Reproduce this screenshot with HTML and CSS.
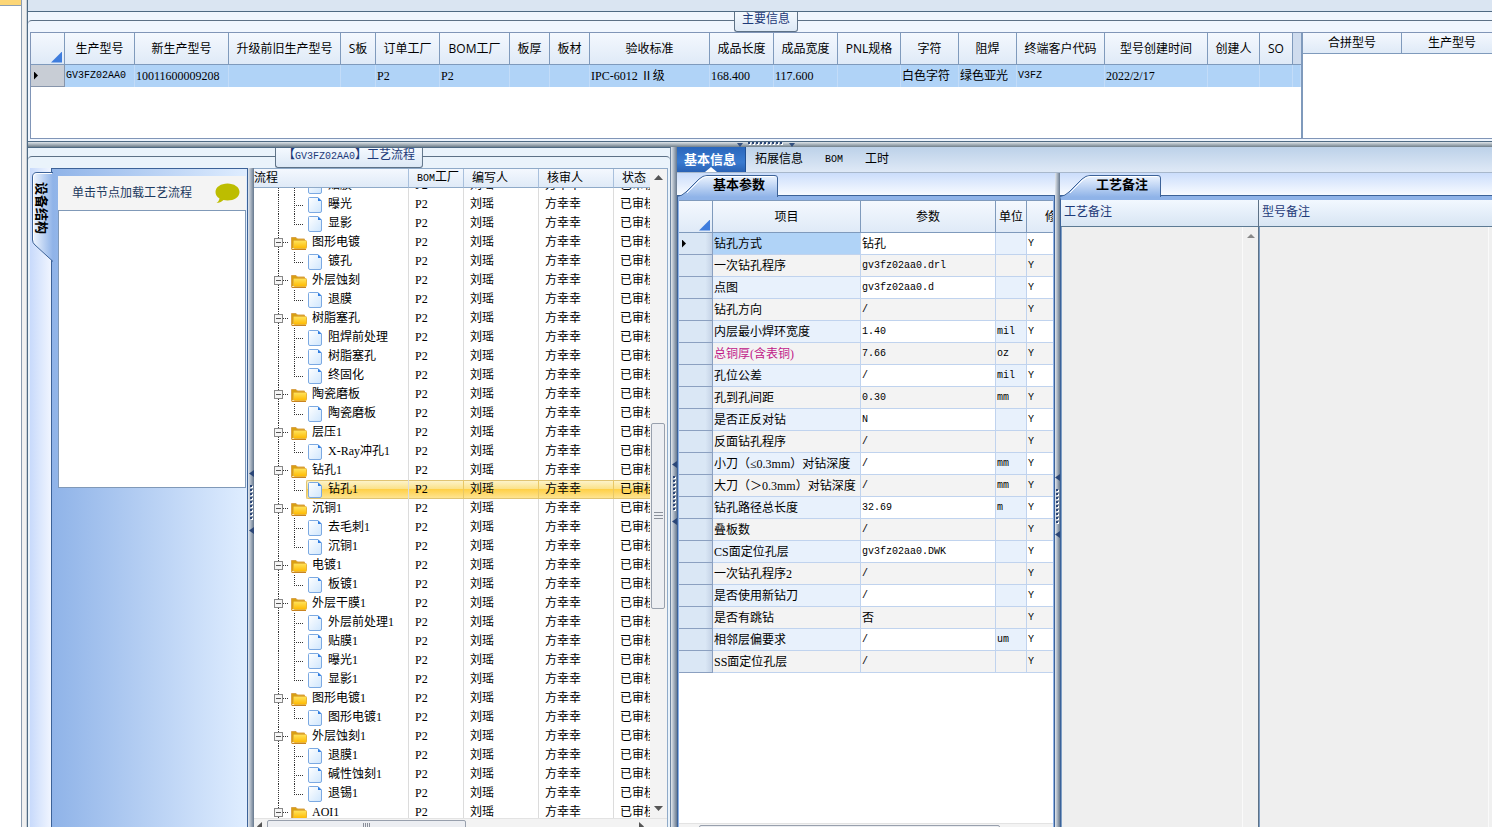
FILE: index.html
```html
<!DOCTYPE html>
<html lang="zh-CN">

<head>
  <meta charset="UTF-8">
  <title>工艺流程</title>
  <link rel="stylesheet" href="styles.css">
</head>

<body>
  <!-- 公用图标 -->
  <svg class="defs" width="0" height="0">
    <defs>
      <linearGradient id="gFolder" x1="0" y1="0" x2="0" y2="1">
        <stop offset="0" stop-color="#ffe45c" />
        <stop offset="1" stop-color="#ffb900" />
      </linearGradient>
      <linearGradient id="gFile" x1="0" y1="0" x2="1" y2="1">
        <stop offset="0" stop-color="#ffffff" />
        <stop offset="1" stop-color="#cfe6fd" />
      </linearGradient>
      <linearGradient id="gTab" x1="0" y1="0" x2="0" y2="1">
        <stop offset="0" stop-color="#eef5ff" />
        <stop offset="1" stop-color="#8fb3e8" />
      </linearGradient>
      <linearGradient id="gSide" x1="0" y1="0" x2="1" y2="0">
        <stop offset="0" stop-color="#f2f7ff" />
        <stop offset="1" stop-color="#8fb3e8" />
      </linearGradient>
      <symbol id="folder" viewBox="0 0 16 14">
        <path d="M0.5 13V1.5H5L6.5 3H13.5V5" fill="#d9a012" stroke="#d9a24a" />
        <path d="M0.5 13.5V2" stroke="#d9a24a" />
        <rect x="2.5" y="4.5" width="13" height="8" rx="1" fill="url(#gFolder)" stroke="#e8b53a" />
        <path d="M1 13.5H15" stroke="#c98420" />
      </symbol>
      <symbol id="file" viewBox="0 0 14 16">
        <path d="M1.5 0.5H10L13.5 4V14Q13.5 15.5 12 15.5H2Q0.5 15.5 0.5 14V1.5Q0.5 0.5 1.5 0.5Z" fill="url(#gFile)" stroke="#7ba9e2" />
        <path d="M10 0.5L13.5 4H10Z" fill="#2f7de0" />
      </symbol>
    </defs>
  </svg>

  <div class="app">
    <div class="dock">
      <div class="dock-item"></div>
    </div>
    <div class="edge"></div>

    <div class="main">
      <div class="topbar"></div>

      <!-- 主要信息 -->
      <section class="group info">
        <h2 class="caption">主要信息</h2>
        <div class="frame">
          <div class="info-grids">
            <div class="grid-left">
              <table class="grid" id="infoTable">
                <colgroup id="infoCols"></colgroup>
                <thead><tr id="infoHead"></tr></thead>
                <tbody><tr class="current" id="infoRow"></tr></tbody>
              </table>
            </div>
            <div class="grid-right">
              <table class="grid short">
                <colgroup><col class="w99"><col class="w101"></colgroup>
                <thead><tr><th>合拼型号</th><th>生产型号</th></tr></thead>
              </table>
            </div>
          </div>
        </div>
      </section>

      <div class="split-h">
        <svg width="60" height="5" viewBox="0 0 60 5">
          <path d="M0 1H6L3 5ZM58 1H52L55 5" fill="#33507f" transform="translate(1 0)" />
          <path d="M13 2H47" stroke="#ffffff" stroke-width="2" stroke-dasharray="2 2" />
          <path d="M12 1H47" stroke="#2b4677" stroke-width="2" stroke-dasharray="2 2" />
        </svg>
      </div>

      <div class="lower">
        <!-- 工艺流程 -->
        <section class="group flow">
          <h2 class="caption">【<span class="code">GV3FZ02AA0</span>】工艺流程</h2>
          <div class="frame">
            <div class="side">
              <div class="side-tabs">
                <button type="button" class="side-tab">
                  <svg viewBox="0 0 21 90" width="21" height="90">
                    <path d="M21 0.5H5Q0.5 0.5 0.5 5V68Q0.5 71 3 73L21 89.5Z" fill="url(#gSide)" />
                    <path d="M21 0.5H5Q0.5 0.5 0.5 5V68Q0.5 71 3 73L21 89.5" fill="none" stroke="#3c6298" />
                    <path d="M20 1.5H5Q1.5 1.5 1.5 5V68" fill="none" stroke="#ffffff" />
                  </svg>
                  <span>设备结构</span>
                </button>
              </div>
              <div class="side-body">
                <div class="tip">
                  <span>单击节点加载工艺流程</span>
                  <svg width="25" height="21" viewBox="0 0 25 21">
                    <path d="M12.500 0.500C19 0.500 24.500 4 24.500 9C24.500 14 19 17.500 12.500 17.500C11 17.500 9.500 17.300 8.500 17C6.500 19 4 20 1.500 20C3 19 4 17.500 4.500 15.500C2 14 0.500 12 0.500 9C0.500 4 6 0.500 12.500 0.500Z" fill="#bdbd00" />
                  </svg>
                </div>
                <div class="struct"></div>
              </div>
            </div>

            <div class="split-v">
              <svg class="grip" width="5" height="64" viewBox="0 0 5 64"><use href="#grip" /></svg>
            </div>

            <div class="tree">
              <div class="tree-main">
                <div class="tree-view">
                  <table class="tree-head">
                    <colgroup><col class="w155"><col class="w55"><col class="w75"><col class="w75"><col class="w75"></colgroup>
                    <thead>
                      <tr><th class="first">流程</th><th><span class="code">BOM</span>工厂</th><th>编写人</th><th>核审人</th><th>状态</th></tr>
                    </thead>
                  </table>
                  <div class="tree-scroll">
                    <table class="tree-rows">
                      <colgroup><col class="w155"><col class="w55"><col class="w75"><col class="w75"><col class="w75"></colgroup>
                      <tbody id="treeBody"></tbody>
                    </table>
                  </div>
                </div>
                <div class="vbar">
                  <svg width="9" height="5" viewBox="0 0 9 5"><path d="M0 5L4.500 0L9 5Z" fill="#555" /></svg>
                  <i class="before"></i>
                  <div class="thumb">
                    <svg width="9" height="8" viewBox="0 0 9 8"><path d="M0 0.500H9M0 3.500H9M0 6.500H9" stroke="#8a8f99" /></svg>
                  </div>
                  <i class="after"></i>
                  <svg width="9" height="5" viewBox="0 0 9 5"><path d="M0 0L4.500 5L9 0Z" fill="#555" /></svg>
                </div>
              </div>
              <div class="hbar">
                <svg width="5" height="9" viewBox="0 0 5 9"><path d="M5 0L0 4.500L5 9Z" fill="#555" /></svg>
                <div class="thumb">
                  <svg width="8" height="8" viewBox="0 0 8 8"><path d="M0.500 0V8M2.500 0V8M4.500 0V8M6.500 0V8" stroke="#8a8f99" /></svg>
                </div>
                <i class="after"></i>
                <svg width="5" height="9" viewBox="0 0 5 9"><path d="M0 0L5 4.500L0 9Z" fill="#555" /></svg>
              </div>
            </div>
          </div>
        </section>

        <div class="split-v">
          <svg class="grip" width="5" height="64" viewBox="0 0 5 64"><use href="#grip" /></svg>
        </div>

        <!-- 基本信息 -->
        <section class="detail">
          <nav class="tabs">
            <button type="button" class="tab active">基本信息</button>
            <button type="button" class="tab">拓展信息</button>
            <button type="button" class="tab code">BOM</button>
            <button type="button" class="tab">工时</button>
          </nav>
          <div class="panes">
            <div class="pane params">
              <div class="subtabs">
                <button type="button" class="subtab">
                  <svg viewBox="0 0 101 22" width="101" height="22">
                    <path d="M0 22Q5 21 9 17L22 4Q26 0.500 30 0.500H98Q100.500 0.500 100.500 3V22Z" fill="url(#gTab)" />
                    <path d="M0 21.500Q5 21 9 17L22 4Q26 0.500 30 0.500H98Q100.500 0.500 100.500 3V22" fill="none" stroke="#3c6298" />
                    <path d="M10 18L23 5Q27 1.500 30 1.500H97" fill="none" stroke="#ffffff" />
                  </svg>
                  <span>基本参数</span>
                </button>
              </div>
              <div class="pane-body">
                <div class="param-view">
                  <table class="grid" id="paramTable">
                    <colgroup><col class="w34"><col class="w148"><col class="w135"><col class="w31"><col class="w61"></colgroup>
                    <thead>
                      <tr><th class="corner"><i></i></th><th>项目</th><th>参数</th><th>单位</th><th>修改</th></tr>
                    </thead>
                    <tbody id="paramBody"></tbody>
                  </table>
                </div>
                <div class="hbar slim">
                  <svg width="5" height="9" viewBox="0 0 5 9"><path d="M5 0L0 4.500L5 9Z" fill="#555" /></svg>
                  <div class="thumb">
                    <svg width="8" height="8" viewBox="0 0 8 8"><path d="M0.500 0V8M2.500 0V8M4.500 0V8M6.500 0V8" stroke="#8a8f99" /></svg>
                  </div>
                  <svg width="5" height="9" viewBox="0 0 5 9"><path d="M0 0L5 4.500L0 9Z" fill="#555" /></svg>
                </div>
              </div>
            </div>

            <div class="split-v low">
              <svg class="grip" width="5" height="64" viewBox="0 0 5 64">
                <g id="grip">
                  <path d="M5 0V7L0 3.500ZM5 57V64L0 60.500Z" fill="#2b4677" />
                  <path d="M3 16V50" stroke="#ffffff" stroke-width="2" stroke-dasharray="2 2" />
                  <path d="M2 15V49" stroke="#2b4677" stroke-width="2" stroke-dasharray="2 2" />
                </g>
              </svg>
            </div>

            <div class="pane notes">
              <div class="subtabs">
                <button type="button" class="subtab">
                  <svg viewBox="0 0 101 22" width="101" height="22">
                    <path d="M0 22Q5 21 9 17L22 4Q26 0.500 30 0.500H98Q100.500 0.500 100.500 3V22Z" fill="url(#gTab)" />
                    <path d="M0 21.500Q5 21 9 17L22 4Q26 0.500 30 0.500H98Q100.500 0.500 100.500 3V22" fill="none" stroke="#3c6298" />
                    <path d="M10 18L23 5Q27 1.500 30 1.500H97" fill="none" stroke="#ffffff" />
                  </svg>
                  <span>工艺备注</span>
                </button>
              </div>
              <div class="note-cols">
                <div class="note">
                  <label for="craftNote">工艺备注</label>
                  <div class="note-body">
                    <textarea id="craftNote" readonly></textarea>
                    <div class="note-bar">
                      <svg width="8" height="4" viewBox="0 0 8 4"><path d="M0 4L4 0L8 4Z" fill="#888" /></svg>
                    </div>
                  </div>
                </div>
                <div class="note last">
                  <label for="modelNote">型号备注</label>
                  <div class="note-body">
                    <textarea id="modelNote" readonly></textarea>
                    <div class="note-bar"></div>
                  </div>
                </div>
              </div>
            </div>
          </div>
        </section>
      </div>
    </div>
  </div>

  <script>
    // 主要信息: 列名, 列宽样式, 内容
    var infoList = [
      ['生产型号', 'w70', 'GV3FZ02AA0', 'code'],
      ['新生产型号', 'w94', '10011600009208'],
      ['升级前旧生产型号', 'w112', ''],
      ['S板', 'w35', ''],
      ['订单工厂', 'w64', 'P2'],
      ['BOM工厂', 'w70', 'P2'],
      ['板厚', 'w40', ''],
      ['板材', 'w40', ''],
      ['验收标准', 'w120', 'IPC-6012 Ⅱ级'],
      ['成品长度', 'w64', '168.400'],
      ['成品宽度', 'w64', '117.600'],
      ['PNL规格', 'w63', ''],
      ['字符', 'w58', '白色字符'],
      ['阻焊', 'w58', '绿色亚光'],
      ['终端客户代码', 'w88', 'V3FZ', 'code'],
      ['型号创建时间', 'w103', '2022/2/17'],
      ['创建人', 'w52', ''],
      ['SO', 'w33', '']
    ];

    var cols = '<col class="w34">';
    var head = '<th class="corner"><i></i></th>';
    var row = '<td class="sel"><i class="cur"></i></td>';
    for (var i = 0; i < infoList.length; i++) {
      var c = infoList[i];
      cols += '<col class="' + c[1] + '">';
      head += '<th>' + c[0] + '</th>';
      row += '<td class="' + (c[3] || '') + '">' + c[2] + '</td>';
    }
    document.getElementById('infoCols').innerHTML = cols + '<col>';
    document.getElementById('infoHead').innerHTML = head + '<th class="rest"></th>';
    document.getElementById('infoRow').innerHTML = row + '<td></td>';

    // 工艺流程树: 工序 + 子工序
    var flowList = [
      ['', ['贴膜', '曝光', '显影']],
      ['图形电镀', ['镀孔']],
      ['外层蚀刻', ['退膜']],
      ['树脂塞孔', ['阻焊前处理', '树脂塞孔', '终固化']],
      ['陶瓷磨板', ['陶瓷磨板']],
      ['层压1', ['X-Ray冲孔1']],
      ['钻孔1', ['钻孔1']],
      ['沉铜1', ['去毛刺1', '沉铜1']],
      ['电镀1', ['板镀1']],
      ['外层干膜1', ['外层前处理1', '贴膜1', '曝光1', '显影1']],
      ['图形电镀1', ['图形电镀1']],
      ['外层蚀刻1', ['退膜1', '碱性蚀刻1', '退锡1']],
      ['AOI1', []]
    ];

    function treeRow(name, type, cls) {
      var size = type == 'folder' ? 'width="16" height="14"' : 'width="14" height="16"';
      var line = type == 'folder' ? '<i class="box"></i><i class="dash"></i>' : '<i class="elbow"></i>';
      return '<tr class="' + type + ' ' + cls + '"><td><div class="cell"><i class="trunk"></i>' + line +
        '<div class="node"><svg ' + size + '><use href="#' + type + '"/></svg><span>' + name + '</span></div></div></td>' +
        '<td>P2</td><td>刘瑶</td><td>方幸幸</td><td>已审核</td></tr>';
    }

    var html = '';
    for (var i = 0; i < flowList.length; i++) {
      var name = flowList[i][0], list = flowList[i][1];
      if (name) html += treeRow(name, 'folder', '');
      for (var j = 0; j < list.length; j++) {
        var cls = j == list.length - 1 ? 'end' : '';
        if (name == '钻孔1') cls += ' active';
        html += treeRow(list[j], 'file', cls);
      }
    }
    document.getElementById('treeBody').innerHTML = html;

    // 基本参数: 项目, 参数, 单位
    var paramList = [
      ['钻孔方式', '钻孔', ''],
      ['一次钻孔程序', 'gv3fz02aa0.drl', ''],
      ['点图', 'gv3fz02aa0.d', ''],
      ['钻孔方向', '/', ''],
      ['内层最小焊环宽度', '1.40', 'mil'],
      ['总铜厚(含表铜)', '7.66', 'oz'],
      ['孔位公差', '/', 'mil'],
      ['孔到孔间距', '0.30', 'mm'],
      ['是否正反对钻', 'N', ''],
      ['反面钻孔程序', '/', ''],
      ['小刀（≤0.3mm）对钻深度', '/', 'mm'],
      ['大刀（＞0.3mm）对钻深度', '/', 'mm'],
      ['钻孔路径总长度', '32.69', 'm'],
      ['叠板数', '/', ''],
      ['CS面定位孔层', 'gv3fz02aa0.DWK', ''],
      ['一次钻孔程序2', '/', ''],
      ['是否使用新钻刀', '/', ''],
      ['是否有跳钻', '否', ''],
      ['相邻层偏要求', '/', 'um'],
      ['SS面定位孔层', '/', '']
    ];

    html = '';
    for (var i = 0; i < paramList.length; i++) {
      var p = paramList[i];
      html += '<tr><td class="sel">' + (i == 0 ? '<i class="cur"></i>' : '') + '</td>' +
        '<td class="name' + (i == 0 ? ' on' : '') + (i == 5 ? ' red' : '') + '">' + p[0] + '</td>' +
        '<td class="' + (/^[\w.\/]+$/.test(p[1]) ? 'code' : '') + '">' + p[1] + '</td>' +
        '<td class="unit code">' + p[2] + '</td><td class="code">Y</td></tr>';
    }
    document.getElementById('paramBody').innerHTML = html;
  </script>
</body>

</html>
```

FILE: styles.css
```css
/* reset */
* {
  box-sizing: border-box;
}

body,
h2,
table,
button,
textarea {
  margin: 0;
  padding: 0;
}

body,
button,
textarea {
  font: 12px/18px "Liberation Serif", "Noto Sans CJK SC", serif;
  color: #000;
}

body {
  overflow: hidden;
}

button {
  border: 0;
  background: none;
  cursor: pointer;
}

i {
  display: block;
  flex: none;
}

svg {
  display: block;
  flex: none;
}

.defs {
  position: absolute;
}

table {
  border-collapse: separate;
  border-spacing: 0;
  table-layout: fixed;
}

th,
td {
  padding: 0;
  font-weight: normal;
  white-space: nowrap;
  overflow: hidden;
}

.code {
  font-family: "Liberation Mono", "Noto Sans CJK SC", monospace;
  font-size: 10px;
}

/* 列宽 */
.w31 { width: 31px; }
.w33 { width: 33px; }
.w34 { width: 34px; }
.w35 { width: 35px; }
.w40 { width: 40px; }
.w52 { width: 52px; }
.w55 { width: 55px; }
.w58 { width: 58px; }
.w61 { width: 61px; }
.w63 { width: 63px; }
.w64 { width: 64px; }
.w70 { width: 70px; }
.w75 { width: 75px; }
.w88 { width: 88px; }
.w94 { width: 94px; }
.w99 { width: 99px; }
.w101 { width: 101px; }
.w103 { width: 103px; }
.w112 { width: 112px; }
.w120 { width: 120px; }
.w135 { width: 135px; }
.w148 { width: 148px; }
.w155 { width: 155px; }

/* 整体 */
.app {
  display: flex;
  height: 100vh;
  overflow: hidden;
}

.dock {
  width: 21px;
  background: #fff;
}

.dock-item {
  height: 6px;
  background: #fcd677;
  border-bottom: 1px solid #8f9fb0;
}

.edge {
  width: 6px;
  background: #f0f0f0;
  border-left: 1px solid #8b9cb0;
  border-right: 1px solid #c8cfd6;
}

.main {
  flex: 1;
  min-width: 0;
  display: flex;
  flex-direction: column;
  border-left: 1px solid #4f6a83;
}

.topbar {
  height: 12px;
  background: #dae5f2;
  border-bottom: 1px solid #4f6a83;
}

.group {
  position: relative;
  display: flex;
  flex-direction: column;
  background: #f0f6fe;
}

.caption {
  position: absolute;
  top: 0;
  left: 50%;
  transform: translateX(-50%);
  height: 20px;
  padding: 0 7px;
  font-size: 12px;
  line-height: 15px;
  font-weight: normal;
  white-space: nowrap;
  color: #1e3a78;
  background: linear-gradient(#f4f9ff, #dce8f5);
  border: 1px solid #5d7186;
  border-top: 0;
  border-radius: 0 0 3px 3px;
}

.frame {
  margin-top: 8px;
  padding: 11px 2px 2px;
  border-top: 1px solid #5d7186;
  border-radius: 4px 4px 0 0;
}

/* 表格 */
.grid th {
  height: 32px;
  font: 12px/18px "Open Sans", "Noto Sans CJK SC", sans-serif;
  text-align: center;
  background: linear-gradient(#f4f8fe, #dfeaf7);
  border-right: 1px solid #7f9abc;
  border-bottom: 1px solid #7f9abc;
}

.grid.short {
  width: 200px;
}

.grid.short th {
  height: 21px;
}

.grid td {
  height: 22px;
  line-height: 20px;
  padding-left: 1px;
}

.grid th.corner i {
  width: 11px;
  height: 11px;
  margin: 17px 2px 0 auto;
  background: #3f7ddd;
  clip-path: polygon(100% 0, 100% 100%, 0 100%);
}

.grid th.rest {
  background: #cfdcee;
  border-right: 0;
}

.cur {
  width: 4px;
  height: 8px;
  margin-left: 2px;
  background: #000;
  clip-path: polygon(0 0, 100% 50%, 0 100%);
}

/* 主要信息 */
.info {
  margin-right: -12px;
}

.info-grids {
  display: flex;
  height: 107px;
  border: 1px solid #8095b7;
  background: #fff;
}

.grid-left {
  width: 1271px;
  overflow: hidden;
  border-right: 1px solid #7f9abc;
}

.grid-right {
  flex: 1;
  overflow: hidden;
  border-left: 1px solid #7f9abc;
}

#infoTable {
  width: 100%;
}

#infoTable td {
  background: #b0d3f7;
  border-right: 1px solid #c3dcf8;
}

#infoTable td.sel {
  background: #c8cdd5;
  border-right: 1px solid #8795ab;
  border-bottom: 1px solid #8795ab;
}

/* 分隔条 */
.split-h {
  height: 6px;
  display: flex;
  justify-content: center;
  margin-right: -12px;
  border-top: 1px solid #4f6a83;
  background: linear-gradient(#dfe5ea, #6f7e8a);
}

.split-v {
  width: 6px;
  flex: none;
  display: flex;
  justify-content: center;
  background: linear-gradient(to right, #e3e8ee, #66788e);
}

.split-v .grip {
  margin-top: 314px;
}

.split-v.low {
  width: 5px;
}

.split-v.low .grip {
  margin-top: 301px;
}

.lower {
  flex: 1;
  min-height: 0;
  display: flex;
}

/* 工艺流程 */
.flow {
  flex: 642 1 0;
  min-width: 0;
  border-top: 1px solid #4f6a83;
  border-right: 1px solid #6d84a0;
  background: #eaf3fb;
}

.flow .frame {
  flex: 1;
  min-height: 0;
  display: flex;
  padding-bottom: 0;
  border-right: 0;
}

.flow .split-v .grip {
  margin-top: 302px;
}

.side {
  width: 218px;
  flex: none;
  display: flex;
  border-right: 1px solid #3c6298;
}

.side-tabs {
  width: 22px;
  padding: 4px 0 0 2px;
  background: linear-gradient(to right, #c8dafb, #f0f5ff);
  border-right: 1px solid #3c6298;
}

.side-tab {
  position: relative;
  display: block;
  width: 21px;
  height: 90px;
}

.side-tab span {
  position: absolute;
  top: 10px;
  left: 0;
  writing-mode: vertical-rl;
  text-orientation: sideways;
  font-size: 13px;
  font-weight: bold;
}

.side-body {
  flex: 1;
  padding: 7px 1px 0 6px;
  border-top: 1px solid #3c6298;
  background: linear-gradient(to right, #8fb3e8, #dfedff);
}

.tip {
  display: flex;
  align-items: center;
  justify-content: space-between;
  height: 34px;
  padding: 0 6px 0 14px;
  background: #f4f4f4;
  color: #1e3a5f;
}

.struct {
  height: 278px;
  background: #fff;
  border: 1px solid #8099b8;
}

.tree {
  flex: 1;
  min-width: 0;
  display: flex;
  flex-direction: column;
  background: #fff;
  border-top: 1px solid #8faac8;
  border-right: 1px solid #8faac8;
}

.tree-main {
  flex: 1;
  min-height: 0;
  display: flex;
}

.tree-view {
  flex: 1;
  min-width: 0;
  overflow: hidden;
  display: flex;
  flex-direction: column;
}

.tree-head,
.tree-rows {
  width: 435px;
  flex: none;
}

.tree-head th {
  height: 18px;
  padding-left: 8px;
  text-align: left;
  line-height: 17px;
  background: linear-gradient(#f4f8fe, #dfeaf7);
  border-right: 1px solid #a9c0dc;
  border-bottom: 1px solid #8faac8;
}

.tree-head th.first {
  padding-left: 0;
}

.tree-scroll {
  flex: 1;
  min-height: 0;
  overflow: hidden;
}

/* 已向下滚动 */
.tree-rows {
  margin-top: -12px;
}

.tree-rows td {
  height: 19px;
  line-height: 19px;
  padding-left: 6px;
  border-right: 1px solid #dcdcdc;
}

.tree-rows td:first-child {
  padding-left: 0;
}

.cell {
  display: flex;
  align-items: center;
  height: 19px;
  padding-left: 24px;
}

.trunk {
  width: 1px;
  height: 19px;
  background: repeating-linear-gradient(#333 0 1px, transparent 1px 2px);
}

.box {
  position: relative;
  width: 9px;
  height: 9px;
  margin-left: -5px;
  border: 1px solid #888;
  background: linear-gradient(#555, #555) center / 5px 1px no-repeat #f6f6f6;
}

.dash {
  width: 6px;
  height: 1px;
  background: repeating-linear-gradient(to right, #333 0 1px, transparent 1px 2px);
}

.elbow {
  width: 10px;
  height: 19px;
  margin-left: 15px;
  background:
    repeating-linear-gradient(#333 0 1px, transparent 1px 2px) 0 0 / 1px 19px no-repeat,
    repeating-linear-gradient(to right, #333 0 1px, transparent 1px 2px) 0 10px / 10px 1px no-repeat;
}

.end .elbow {
  background-size: 1px 11px, 10px 1px;
}

.node {
  flex: 1;
  display: flex;
  align-items: center;
  height: 19px;
  gap: 5px;
  margin-left: 2px;
  padding-left: 4px;
}

.folder .node {
  padding-left: 0;
}

.file .node svg {
  margin-right: 1px;
}

.file .node {
  padding-left: 2px;
}

.active .node,
.active td:not(:first-child) {
  background: linear-gradient(#fdf3c8, #fbe28a 45%, #ffd048 50%, #fee491);
  border-top: 1px solid #e0c473;
  border-bottom: 1px solid #e0c473;
}

.active .node {
  border-left: 1px solid #e0c473;
  border-radius: 2px 0 0 2px;
}

.file.active .node {
  padding-left: 1px;
}

.tree-rows .active td {
  line-height: 17px;
}

.tree-rows .active td:not(:first-child) {
  border-right-color: #e8c866;
}

.vbar {
  width: 17px;
  flex: none;
  display: flex;
  flex-direction: column;
  align-items: center;
  padding: 6px 2px 7px 1px;
  background: #f3f3f3;
}

.vbar .before {
  flex: 244;
}

.vbar .after {
  flex: 198;
}

.thumb {
  display: flex;
  align-items: center;
  justify-content: center;
  border: 1px solid #98a0ad;
  border-radius: 2px;
  background: #eceef2;
}

.vbar .thumb {
  width: 14px;
  flex: 185;
}

.hbar {
  height: 9px;
  flex: none;
  display: flex;
  align-items: flex-start;
  padding: 0 23px 0 3px;
  overflow: hidden;
  background: #f3f3f3;
  border-top: 1px solid #e3e3e3;
}

.hbar > svg {
  margin-top: 3px;
}

.hbar .thumb {
  flex: 199;
  height: 15px;
  margin: 1px 0 0 5px;
  align-items: flex-start;
  padding-top: 2px;
}

.hbar .after {
  flex: 174;
}

.hbar.slim {
  height: 4px;
  padding: 0 10px;
}

.hbar.slim .thumb {
  flex: 1;
  margin: 1px 38px 0 5px;
  padding-top: 1px;
}

/* 右侧页签 */
.detail {
  flex: 815 1 0;
  min-width: 0;
  display: flex;
  flex-direction: column;
}

.tabs {
  display: flex;
  height: 26px;
  flex: none;
  background: linear-gradient(#bcd1e9, #dfe9f6);
  border-bottom: 1px solid #a8b8cc;
}

.tab {
  position: relative;
  padding: 0 9px;
  line-height: 23px;
}

.tab.code {
  padding: 0 13px;
}

.tab.active {
  padding: 0 9px 0 7px;
  font-size: 13px;
  font-weight: bold;
  color: #fff;
  background: linear-gradient(#2a66bb, #3a7bd0 60%, #2a62b4);
  border-right: 1px solid #1f4f94;
}

.tab.active::after {
  content: "";
  position: absolute;
  left: 50%;
  bottom: 0;
  margin-left: -6px;
  border: 6px solid transparent;
  border-top-width: 0;
  border-bottom: 5px solid #fff;
}

.panes {
  flex: 1;
  min-height: 0;
  display: flex;
}

.pane {
  min-width: 0;
  display: flex;
  flex-direction: column;
}

.params {
  flex: 378 1 0;
}

.notes {
  flex: 432 1 0;
}

.subtabs {
  height: 23px;
  flex: none;
  padding-top: 2px;
  background: linear-gradient(#cbddfb, #f8fbff);
  border-bottom: 1px solid #3c6298;
}

.subtab {
  position: relative;
  display: block;
  width: 101px;
  height: 21px;
}

.subtab svg {
  height: 22px;
}

.subtab span {
  position: absolute;
  top: 0;
  left: 36px;
  line-height: 20px;
  font-size: 13px;
  font-weight: bold;
}

.pane-body {
  flex: 1;
  min-height: 0;
  display: flex;
  flex-direction: column;
  padding: 4px 1px 0;
  background: #8fb3e8;
  border: solid #3c6298;
  border-width: 0 1px;
}

.param-view {
  flex: 1;
  min-height: 0;
  overflow: hidden;
  background: #fff;
  border-top: 1px solid #7f9abc;
}

#paramTable {
  width: 409px;
}

#paramTable td {
  border-right: 1px solid #c0d3ee;
  border-bottom: 1px solid #c0d3ee;
}

#paramTable tr:nth-child(even) td {
  background: #f3f3f3;
}

#paramTable tr:nth-child(odd) .name,
#paramTable tr:nth-child(odd) .unit {
  background: #e8f1fc;
}

#paramTable tr .sel,
#paramTable tr:nth-child(even) .sel {
  background: linear-gradient(to right, #dae7f5 80%, #c5d3e6);
  border-color: #8ba0c0;
}

#paramTable tr:nth-child(odd) .on {
  background: #b0d3f7;
}

#paramTable .red {
  color: #c01888;
}

/* 备注 */
.note-cols {
  flex: 1;
  min-height: 0;
  display: flex;
  border-top: 4px solid #8fb3e8;
  border-left: 1px solid #3c6298;
}

.note {
  flex: 197 1 0;
  display: flex;
  flex-direction: column;
  border-right: 1px solid #5d7186;
}

.note.last {
  flex: 233 1 0;
  border-right: 0;
}

.note label {
  height: 27px;
  line-height: 25px;
  padding-left: 3px;
  color: #1e3a78;
  background: linear-gradient(#f2f8ff, #d8e5f3);
  border-bottom: 1px solid #5d7a93;
}

.note-body {
  flex: 1;
  display: flex;
  border-left: 1px solid #7f9fc4;
  background: #efefef;
}

.note-body textarea {
  flex: 1;
  min-width: 0;
  border: 0;
  resize: none;
  outline: none;
  background: #efefef;
}

.note-bar {
  width: 16px;
  padding: 7px 4px;
  background: #f0f0f0;
  border-left: 1px solid #fafafa;
}

.note.last .note-bar {
  width: 4px;
  padding: 0;
}
```
